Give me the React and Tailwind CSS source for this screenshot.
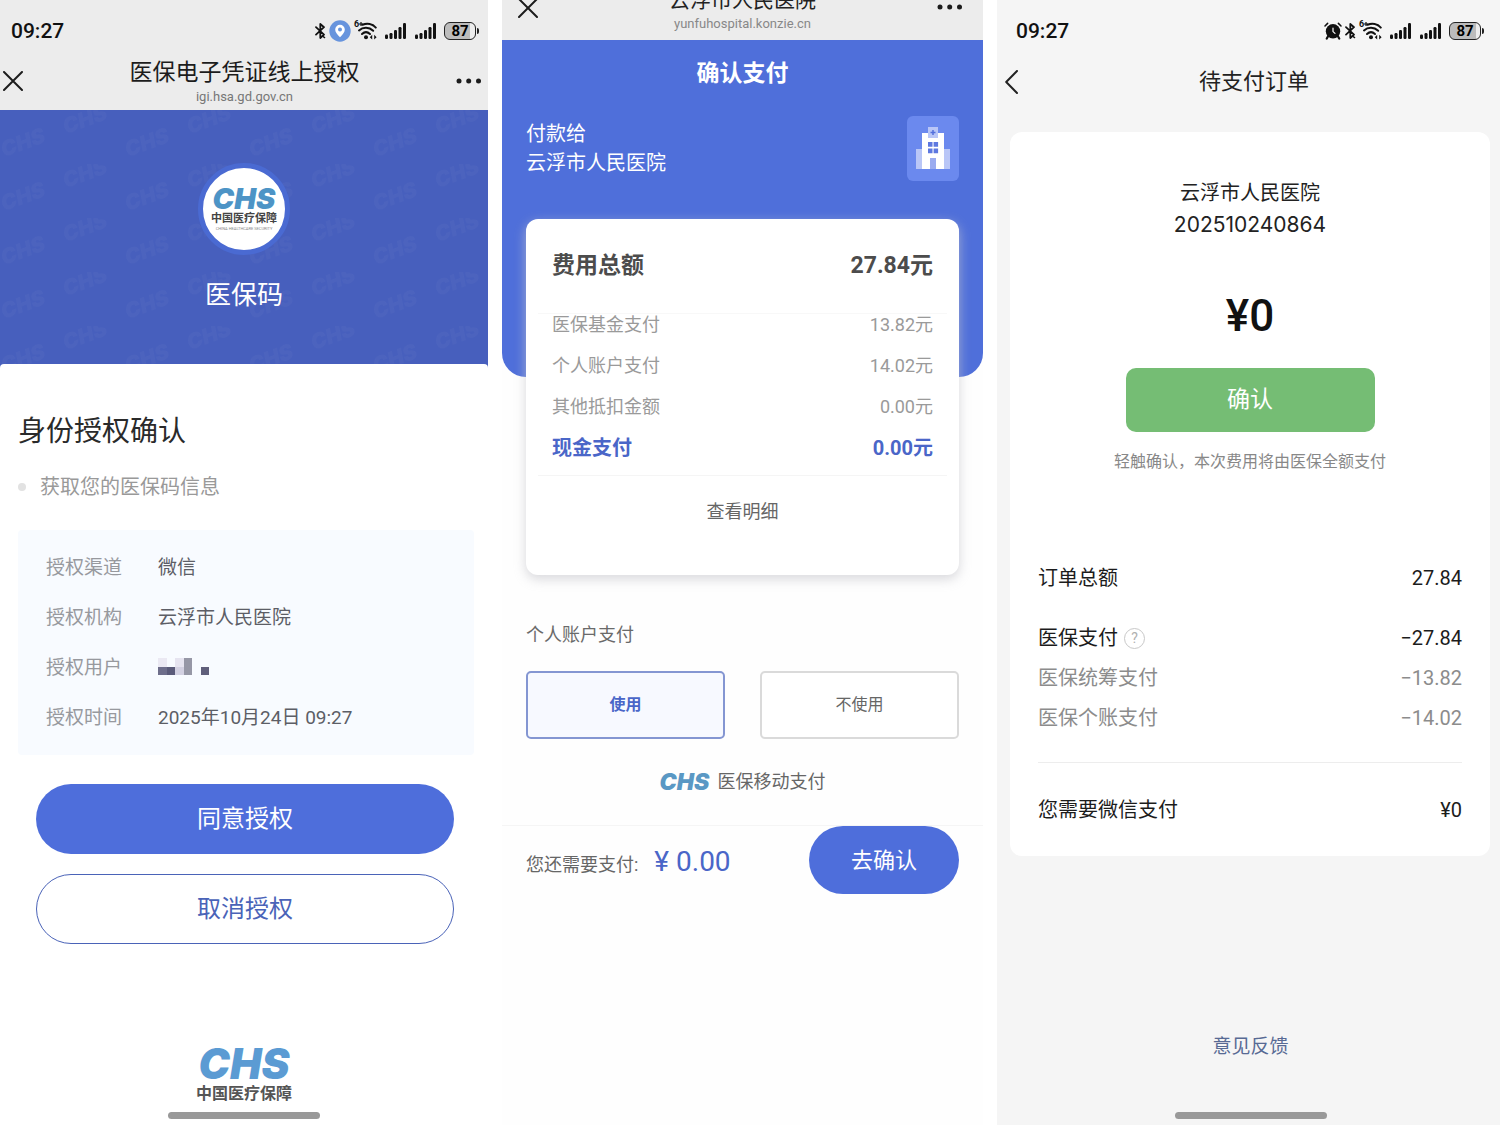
import { useState } from "react";

const authInfo = [
  { label: "授权渠道", value: "微信" },
  { label: "授权机构", value: "云浮市人民医院" },
  { label: "授权用户", value: null },
  { label: "授权时间", value: "2025年10月24日 09:27" },
];

const feeRows = [
  { label: "医保基金支付", value: "13.82元" },
  { label: "个人账户支付", value: "14.02元" },
  { label: "其他抵扣金额", value: "0.00元" },
];

const BluetoothIcon = () => (
  <svg className="w-[11px] h-[18px]" viewBox="0 0 11 18" fill="none" stroke="#111" strokeWidth="1.8" strokeLinejoin="round" strokeLinecap="round">
    <path d="M1 5.2 L9 12.6 L5.3 16 V2 L9 5.2 L1 12.6" />
    <path d="M9.6 15.6 L7.8 14.2" strokeWidth="1.4" />
  </svg>
);

const LocationIcon = () => (
  <svg className="w-[22px] h-[22px]" viewBox="0 0 22 22">
    <circle cx="11" cy="11" r="10.7" fill="#6794dd" />
    <path d="M11 17.3 C8.2 14.6 6.2 12.2 6.2 9.6 a4.8 4.8 0 0 1 9.6 0 C15.8 12.2 13.8 14.6 11 17.3z" fill="#fff" />
    <circle cx="11" cy="9.6" r="2" fill="#6794dd" />
  </svg>
);

const AlarmIcon = () => (
  <svg className="w-[18px] h-[18px]" viewBox="0 0 18 18" fill="none" stroke="#111" strokeLinecap="round">
    <circle cx="9" cy="9.3" r="7.2" fill="#111" stroke="none" />
    <path d="M1 4 L3.6 1.4 M17 4 L14.4 1.4" strokeWidth="1.5" />
    <path d="M4.2 14 L2.8 16.6 M13.800 14 L15.2 16.6" strokeWidth="2.2" />
    <path d="M9 6 V9.6 L11 11.4" stroke="#fff" strokeWidth="1.2" />
  </svg>
);

const WifiIcon = () => (
  <span className="relative block w-[23px] h-[18px]">
    <svg className="w-full h-full" viewBox="0 0 23 18" fill="none" stroke="#111" strokeWidth="2" strokeLinecap="round">
      <path d="M8.500 2.800 C13 1 18.400 1.800 21.800 5.600" />
      <path d="M5 8.400 C9 4.800 15 4.800 19.200 8.800" />
      <path d="M8 12 C10.4 9.8 13.6 9.8 16 12" />
      <circle cx="12" cy="15.2" r="2" fill="#111" stroke="none" />
      <path d="M15.800 15.200 l2.400 -2.400 v4.800z M22.600 15.200 l-2.400 -2.400 v4.800z" fill="#111" stroke="none" />
    </svg>
    <span className="absolute -top-[2px] left-0 text-[9px] leading-[9px] font-bold">6</span>
    <svg className="absolute top-0 left-[5px] w-1 h-1" viewBox="0 0 4 4" stroke="#111" strokeWidth="1.2">
      <path d="M2 0 V4 M0 2 H4" />
    </svg>
  </span>
);

const SignalIcon = () => (
  <svg className="w-[21px] h-4" viewBox="0 0 21 16" fill="#111">
    <rect x="0" y="11.500" width="3" height="4.500" rx="1.2" />
    <rect x="4.5" y="10" width="3" height="6" rx="1.2" />
    <rect x="9" y="7" width="3" height="9" rx="1.2" />
    <rect x="13.5" y="4" width="3" height="12" rx="1.2" />
    <rect x="18" y="0" width="3" height="16" rx="1.2" />
  </svg>
);

const Battery = () => (
  <div className="flex items-center gap-px">
    <div className="w-8 h-[18px] rounded-[6px] border border-[#222] bg-gradient-to-r from-[#bcbcbc] from-85% to-[#eee] to-85% flex items-center justify-center text-[15px] leading-none font-bold text-black">
      87
    </div>
    <div className="w-[2px] h-[6px] rounded-r bg-[#222]"></div>
  </div>
);

const StatusBar = ({ alarm }) => (
  <div className="h-[60px] pt-[2px] flex items-center justify-between text-[#111]">
    <span className="text-[21px] leading-6 font-medium">09:27</span>
    <div className="flex items-center gap-2">
      <div className="flex items-center gap-[3px]">
        {alarm && <AlarmIcon />}
        <BluetoothIcon />
        {!alarm && <LocationIcon />}
        <WifiIcon />
      </div>
      <div className="flex items-center gap-[9px]">
        <SignalIcon />
        <SignalIcon />
      </div>
      <Battery />
    </div>
  </div>
);

const CloseIcon = () => (
  <svg className="w-5 h-5" viewBox="0 0 20 20" stroke="#1c1c1c" strokeWidth="2" strokeLinecap="round">
    <path d="M1 1 L19 19 M19 1 L1 19" />
  </svg>
);

const DotsIcon = () => (
  <svg className="w-[26px] h-[6px]" viewBox="0 0 26 6" fill="#1c1c1c">
    <circle cx="3" cy="3" r="2.5" />
    <circle cx="12.7" cy="3" r="2.5" />
    <circle cx="22.5" cy="3" r="2.5" />
  </svg>
);

const HomeBar = () => <div className="mx-auto w-[152px] h-[7px] rounded-full bg-[#999999]"></div>;

const Mosaic = () => (
  <svg className="w-[51px] h-[17px] mb-1" viewBox="0 0 48 16" shapeRendering="crispEdges" role="img" aria-label="***">
    <rect x="0" y="0" width="8" height="8" fill="#ebe9f3" />
    <rect x="16" y="0" width="8" height="8" fill="#e6e4f0" />
    <rect x="24" y="0" width="8" height="16" fill="#9697a6" />
    <rect x="0" y="8" width="8" height="8" fill="#6e6e8b" />
    <rect x="8" y="8" width="8" height="8" fill="#5b5b7a" />
    <rect x="16" y="8" width="8" height="8" fill="#d3d1e2" />
    <rect x="40" y="8" width="8" height="8" fill="#605f7b" />
  </svg>
);

// Faint repeated brand mark behind the header
const Watermark = () => (
  <svg className="absolute inset-0 w-full h-full" aria-hidden="true">
    <defs>
      <pattern id="chs-tile" width="124" height="54" patternUnits="userSpaceOnUse">
        <g fill="#7282c4" fillOpacity="0.12" fontFamily="Inter, sans-serif" fontWeight="900" fontStyle="italic" fontSize="21">
          <text x="4" y="47" transform="rotate(-20 4 47)">CHS</text>
          <text x="66" y="24" transform="rotate(-20 66 24)">CHS</text>
        </g>
      </pattern>
    </defs>
    <rect width="100%" height="100%" fill="url(#chs-tile)" />
  </svg>
);

const HospitalIcon = () => (
  <svg className="w-[34px] h-[43px]" viewBox="0 0 34 43">
    <rect x="0" y="22" width="34" height="20" fill="#b9c6f7" />
    <rect x="12" y="0" width="10" height="12" fill="#b9c6f7" />
    <path d="M17 3 V8 M14.5 5.5 H19.5" stroke="#5470dc" strokeWidth="1.5" />
    <path d="M6 6 H12 V11 H22 V6 H28 V42 H6z" fill="#fff" />
    <path d="M12 15h4.500v4.800h-4.500z M17.600 15h4.500v4.800h-4.500z M12 21.500h4.500v4.800h-4.500z M17.600 21.500h4.500v4.800h-4.500z" fill="#5d78e0" />
    <rect x="14" y="31" width="6" height="11" fill="#9aabf0" />
  </svg>
);

const AuthScreen = () => (
  <section className="flex flex-col bg-white min-w-0">
    <header className="bg-[#ececec] h-[110px] flex flex-col">
      <div className="pl-[11px] pr-[9px]">
        <StatusBar />
      </div>
      <div className="flex items-start justify-between pl-[3px] pr-[6px]">
        <button aria-label="关闭" className="mt-[11px] w-[26px]"><CloseIcon /></button>
        <div className="text-center pt-px pl-1">
          <h1 className="text-[23px] leading-6 text-[#1c1c1c]">医保电子凭证线上授权</h1>
          <p className="text-[13px] leading-6 text-[#777]">igi.hsa.gd.gov.cn</p>
        </div>
        <button aria-label="更多" className="mt-[18px]"><DotsIcon /></button>
      </div>
    </header>

    <div className="relative h-[258px] bg-[#475fbd] overflow-hidden">
      <Watermark />
      <div className="relative flex flex-col items-center pt-[53px]">
        <div className="w-[92px] h-[92px] rounded-full bg-white border-5 border-[#4a6ad2] flex flex-col items-center justify-center">
          <span className="font-[Inter] text-[29px] leading-6 font-black italic text-[#4d94c6]">CHS</span>
          <span className="text-[11px] leading-4 font-bold text-[#444]">中国医疗保障</span>
          <span className="text-[4px] leading-[4px] text-[#888]">CHINA HEALTHCARE SECURITY</span>
        </div>
        <p className="mt-6 text-[26px] leading-8 text-white">医保码</p>
      </div>
    </div>

    <div className="relative -mt-1 rounded-t bg-white flex-1 flex flex-col">
      <div className="pl-[18px] pr-[14px] pt-12">
        <h2 className="text-[28px] leading-10 text-[#2a2a2a]">身份授权确认</h2>
        <p className="mt-[21px] flex items-center gap-[14px] text-[20px] leading-7 text-[#999]">
          <span className="w-2 h-2 rounded-full bg-[#e2e2e2]"></span>
          获取您的医保码信息
        </p>
        <dl className="mt-[29px] rounded bg-[#f8fbff] px-7 pt-[13px] pb-3 text-[19px]">
          {authInfo.map((item) => (
            <div key={item.label} className="flex items-center h-[50px]">
              <dt className="w-28 text-[#97999e]">{item.label}</dt>
              <dd className="text-[#5c5e66]">{item.value ?? <Mosaic />}</dd>
            </div>
          ))}
        </dl>
      </div>
      <div className="mt-[29px] pl-9 pr-[34px] flex flex-col gap-5 text-[24px]">
        <button className="h-[70px] rounded-full bg-[#4e6edb] text-white">同意授权</button>
        <button className="h-[70px] rounded-full border border-[#4a63b8] bg-white text-[#4a63b8]">取消授权</button>
      </div>
      <div className="mt-auto pb-[6px]">
        <div className="flex flex-col items-center mb-2">
          <span className="font-[Inter] text-[42px] leading-10 font-black italic text-[#5b9bd3]">CHS</span>
          <span className="text-[16px] leading-5 font-bold text-[#555]">中国医疗保障</span>
        </div>
        <HomeBar />
      </div>
    </div>
  </section>
);

const PayScreen = () => {
  const [useAccount, setUseAccount] = useState(true);

  return (
    <section className="flex flex-col bg-[#fefefe] min-w-0">
      <header className="h-10 bg-[#ececec] overflow-hidden flex items-end justify-between pl-4 pr-5">
        <button aria-label="关闭" className="mb-[22px] w-[30px]"><CloseIcon /></button>
        <div className="text-center">
          <h1 className="text-[21px] leading-6 text-[#222]">云浮市人民医院</h1>
          <p className="pb-1 text-[13px] leading-6 text-[#888]">yunfuhospital.konzie.cn</p>
        </div>
        <button aria-label="更多" className="mb-[30px]"><DotsIcon /></button>
      </header>

      <div className="h-[337px] rounded-b-[24px] bg-[#4f6fda] px-6 text-white">
        <h2 className="pt-[18px] text-center text-[23px] leading-8 font-bold">确认支付</h2>
        <div className="mt-[26px] flex items-center justify-between">
          <p className="text-[20px] leading-[29px]">
            付款给
            <br />
            云浮市人民医院
          </p>
          <div className="w-[52px] h-[65px] rounded-md bg-[#6b89ee] flex items-center justify-center">
            <HospitalIcon />
          </div>
        </div>
      </div>

      <div className="mx-6 -mt-[158px] rounded-xl bg-white shadow-[0_4px_12px_rgba(200,200,205,0.7)] px-3 pb-[29px]">
        <div className="h-[95px] px-[14px] flex items-center justify-between border-b border-[#f8f8f8] text-[23px] font-bold text-[#4c4c4c]">
          <span>费用总额</span>
          <span>27.84元</span>
        </div>
        <dl className="px-[14px] pb-4 flex flex-col gap-[19px] text-[18px] leading-[22px] text-[#9a9a9a] border-b border-[#f5f5f5]">
          {feeRows.map((row) => (
            <div key={row.label} className="flex justify-between">
              <dt>{row.label}</dt>
              <dd>{row.value}</dd>
            </div>
          ))}
          <div className="flex justify-between text-[20px] font-bold text-[#4a66c8]">
            <dt>现金支付</dt>
            <dd>0.00元</dd>
          </div>
        </dl>
        <button className="block w-full h-[70px] text-[18px] text-[#666]">查看明细</button>
      </div>

      <div className="px-6 pt-12">
        <h3 className="text-[18px] leading-6 text-[#6a6a6a]">个人账户支付</h3>
        <div className="mt-6 grid grid-cols-2 gap-[35px] text-[16px]">
          <button
            aria-pressed={useAccount}
            onClick={() => setUseAccount(true)}
            className={`h-[68px] rounded-[5px] border-2 ${
              useAccount ? "border-[#8496d2] bg-[#f7f9ff] font-bold text-[#4a66c8]" : "border-[#dadada] bg-white text-[#666]"
            }`}
          >
            使用
          </button>
          <button
            aria-pressed={!useAccount}
            onClick={() => setUseAccount(false)}
            className={`h-[68px] rounded-[5px] border-2 ${
              useAccount ? "border-[#dadada] bg-white text-[#666]" : "border-[#8496d2] bg-[#f7f9ff] font-bold text-[#4a66c8]"
            }`}
          >
            不使用
          </button>
        </div>
        <div className="h-[86px] flex items-center justify-center gap-2">
          <span className="font-[Inter] text-[23px] leading-6 font-black italic text-[#5a98c4]">CHS</span>
          <span className="text-[18px] leading-6 text-[#666]">医保移动支付</span>
        </div>
      </div>

      <div className="border-t border-[#f5f5f5] px-6 flex items-center justify-between">
        <p className="pt-1 flex items-baseline text-[18px] text-[#666]">
          您还需要支付:
          <span className="ml-4 text-[28px] text-[#4a66c8]">¥ 0.00</span>
        </p>
        <button className="w-[150px] h-[68px] rounded-full bg-[#4e6edb] text-[22px] text-white">去确认</button>
      </div>
    </section>
  );
};

const OrderScreen = () => (
  <section className="flex flex-col bg-[#f5f5f5] min-w-0">
    <div className="pl-[19px] pr-4">
      <StatusBar alarm />
    </div>
    <header className="h-[44px] flex items-center justify-between pl-2 pr-[6px]">
      <button aria-label="返回">
        <svg className="w-[13px] h-6" viewBox="0 0 13 24" fill="none" stroke="#222" strokeWidth="2" strokeLinecap="round" strokeLinejoin="round">
          <path d="M12 1 L1.200 12 L12 23" />
        </svg>
      </button>
      <h1 className="text-[22px] leading-8 text-[#222]">待支付订单</h1>
      <span className="w-1"></span>
    </header>

    <main className="mt-7 ml-[13px] mr-[10px] rounded-xl bg-white px-7">
      <div className="pt-[45px] flex flex-col items-center text-[#222]">
        <h2 className="text-[20px] leading-8">云浮市人民医院</h2>
        <p className="font-[Inter] text-[21px] leading-8">202510240864</p>
        <p className="mt-[45px] text-[44px] leading-[60px] font-medium text-[#111]">¥0</p>
        <button className="mt-[22px] w-[249px] h-16 rounded-[10px] bg-[#75bd74] text-[23px] text-white">确认</button>
        <p className="mt-[18px] text-[16px] leading-6 text-[#888]">轻触确认，本次费用将由医保全额支付</p>
      </div>

      <dl className="mt-[84px] text-[20px] leading-10 text-[#1c1c1c]">
        <div className="flex justify-between mb-5">
          <dt>订单总额</dt>
          <dd>27.84</dd>
        </div>
        <div className="flex justify-between">
          <dt className="flex items-center gap-[6px]">
            医保支付
            <button aria-label="说明" className="w-[21px] h-[21px] rounded-full border border-[#c8c8c8] flex items-center justify-center text-[14px] leading-none text-[#b0b0b0]">
              ?
            </button>
          </dt>
          <dd>−27.84</dd>
        </div>
        <div className="flex justify-between text-[#8c8c8c]">
          <dt>医保统筹支付</dt>
          <dd>−13.82</dd>
        </div>
        <div className="flex justify-between text-[#8c8c8c]">
          <dt>医保个账支付</dt>
          <dd>−14.02</dd>
        </div>
        <div className="mt-6 flex justify-between border-t border-[#ededed] pt-[27px] pb-[26px]">
          <dt>您需要微信支付</dt>
          <dd>¥0</dd>
        </div>
      </dl>
    </main>

    <footer className="mt-auto pb-[6px] pl-1">
      <a href="#feedback" className="block mb-[53px] text-center text-[19px] leading-6 text-[#586a94]">意见反馈</a>
      <HomeBar />
    </footer>
  </section>
);

export default function App() {
  return (
    <div className="min-h-screen bg-white grid grid-cols-[488fr_481fr_503fr] gap-[14px] font-[Roboto,'Noto_Sans_CJK_SC',sans-serif]">
      <AuthScreen />
      <PayScreen />
      <OrderScreen />
    </div>
  );
}
